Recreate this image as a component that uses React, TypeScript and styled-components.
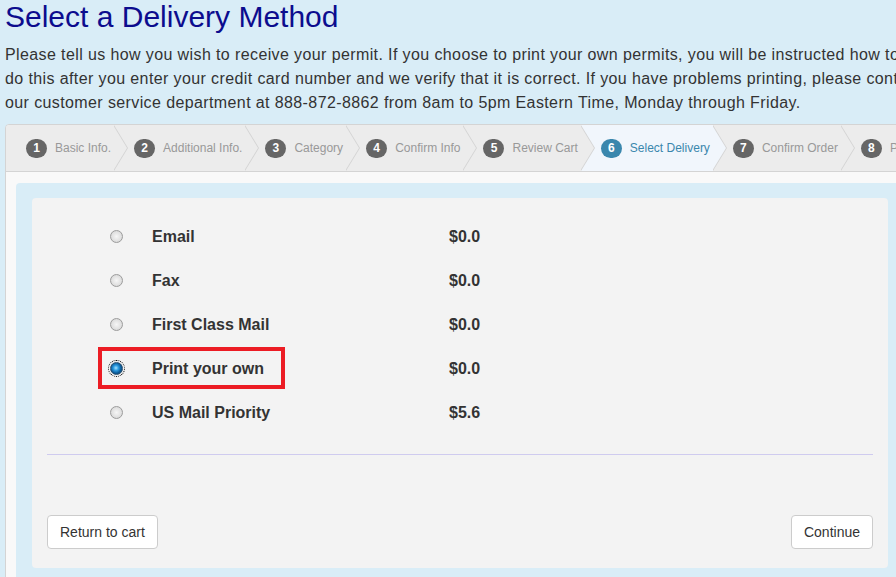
import styled, { createGlobalStyle } from "styled-components";

const GlobalStyle = createGlobalStyle`
  html, body {
    margin: 0;
    padding: 0;
    overflow: hidden;
    background: #d9edf7;
  }
  body {
    font-family: "Liberation Sans", Arial, sans-serif;
    color: #333;
  }
`;

const Page = styled.div`
  width: 910px;
  padding-left: 5px;
`;

const Title = styled.h1`
  margin: 0 0 10px;
  font-size: 30px;
  line-height: 33px;
  font-weight: normal;
  color: #0c0c8e;
`;

const Intro = styled.p`
  margin: 0 0 9px;
  font-size: 16px;
  line-height: 24px;
  letter-spacing: 0.39px;
  white-space: nowrap;
  color: #333;
`;

const Wizard = styled.div`
  border: 1px solid #d4d4d4;
  border-radius: 4px;
  background: #f9f9f9;
`;

const Steps = styled.ul`
  display: flex;
  margin: 0;
  padding: 0;
  list-style: none;
  height: 46px;
  background: #ececec;
  border-bottom: 1px solid #d4d4d4;
  border-radius: 4px 4px 0 0;
  overflow: hidden;
`;

const Step = styled.li<{ $active?: boolean }>`
  position: relative;
  display: flex;
  align-items: center;
  flex-shrink: 0;
  height: 46px;
  padding: 0 3px 0 20px;
  background: ${(p) => (p.$active ? "#f1f6fc" : "#ececec")};
  color: ${(p) => (p.$active ? "#3a87ad" : "#999")};
  font-size: 12px;
  white-space: nowrap;

  &::before,
  &::after {
    content: "";
    position: absolute;
    top: 0;
    border-top: 23px solid transparent;
    border-bottom: 23px solid transparent;
    border-left: 14px solid #d4d4d4;
    z-index: 1;
  }
  &::before {
    right: -14px;
  }
  &::after {
    right: -13px;
    border-left-color: ${(p) => (p.$active ? "#f1f6fc" : "#ececec")};
    z-index: 2;
  }
`;

const Badge = styled.span<{ $active?: boolean }>`
  display: inline-flex;
  align-items: center;
  justify-content: center;
  width: 21px;
  height: 19px;
  border-radius: 10px;
  margin-right: 8px;
  background: ${(p) => (p.$active ? "#3a87ad" : "#666")};
  color: #fff;
  font-weight: bold;
  font-size: 12px;
`;

const StepBody = styled.div`
  padding: 11px 10px 0;
`;

const BluePanel = styled.div`
  background: #d9edf7;
  border-radius: 4px;
  padding: 15px 16px 16px;
`;

const GrayPanel = styled.div`
  background: #f3f3f3;
  border-radius: 4px;
  padding: 17px 15px 19px;
`;

const OptionRow = styled.div`
  position: relative;
  display: grid;
  grid-template-columns: 42px 297px 1fr;
  align-items: center;
  height: 44px;
  padding-left: 63px;
  font-size: 16px;
  font-weight: bold;
  color: #333;
`;

const Radio = styled.span<{ $checked?: boolean }>`
  display: block;
  width: 13px;
  height: 13px;
  margin-top: -1px;
  box-sizing: border-box;
  border-radius: 50%;
  border: 1px solid ${(p) => (p.$checked ? "#2b4f6e" : "#9c9c9c")};
  background: ${(p) =>
    p.$checked
      ? "radial-gradient(circle at 45% 45%, #a8e4ff 0, #2c9be0 30%, #0c5a96 60%, #1d3f5e 100%)"
      : "radial-gradient(circle at 50% 50%, #f6f6f6 0, #e2e2e2 55%, #cfcfcf 100%)"};
  outline: ${(p) => (p.$checked ? "1px dotted #000" : "none")};
  outline-offset: 1px;
`;

const Highlight = styled.span`
  position: absolute;
  left: 51px;
  top: 0;
  width: 187px;
  height: 42px;
  box-sizing: border-box;
  border: 4px solid #ec1c24;
`;

const Divider = styled.hr`
  margin: 19px 0 0;
  border: 0;
  border-top: 1px solid #cfcbef;
`;

const Actions = styled.div`
  display: flex;
  justify-content: space-between;
  margin-top: 60px;
`;

const Button = styled.button`
  font-family: "Liberation Sans", Arial, sans-serif;
  font-size: 14px;
  line-height: 20px;
  padding: 6px 12px;
  background: #fff;
  color: #333;
  border: 1px solid #ccc;
  border-radius: 4px;
`;

const steps = [
  "Basic Info.",
  "Additional Info.",
  "Category",
  "Confirm Info",
  "Review Cart",
  "Select Delivery",
  "Confirm Order",
  "Payment",
];

const options = [
  { name: "Email", price: "$0.0" },
  { name: "Fax", price: "$0.0" },
  { name: "First Class Mail", price: "$0.0" },
  { name: "Print your own", price: "$0.0", checked: true },
  { name: "US Mail Priority", price: "$5.6" },
];

function App() {
  return (
    <Page>
      <GlobalStyle />
      <Title>Select a Delivery Method</Title>
      <Intro>
        Please tell us how you wish to receive your permit. If you choose to print your
        own permits, you will be instructed how to
        <br />
        do this after you enter your credit card number and we verify that it is correct.
        If you have problems printing, please contact
        <br />
        our customer service department at 888-872-8862 from 8am to 5pm Eastern Time,
        Monday through Friday.
      </Intro>
      <Wizard>
        <Steps>
          {steps.map((label, i) => (
            <Step key={label} $active={i === 5}>
              <Badge $active={i === 5}>{i + 1}</Badge>
              {label}
            </Step>
          ))}
        </Steps>
        <StepBody>
          <BluePanel>
            <GrayPanel>
              {options.map((o) => (
                <OptionRow key={o.name}>
                  <Radio $checked={o.checked} />
                  <span>{o.name}</span>
                  <span>{o.price}</span>
                  {o.checked && <Highlight />}
                </OptionRow>
              ))}
              <Divider />
              <Actions>
                <Button>Return to cart</Button>
                <Button>Continue</Button>
              </Actions>
            </GrayPanel>
          </BluePanel>
        </StepBody>
      </Wizard>
    </Page>
  );
}

export default App;
